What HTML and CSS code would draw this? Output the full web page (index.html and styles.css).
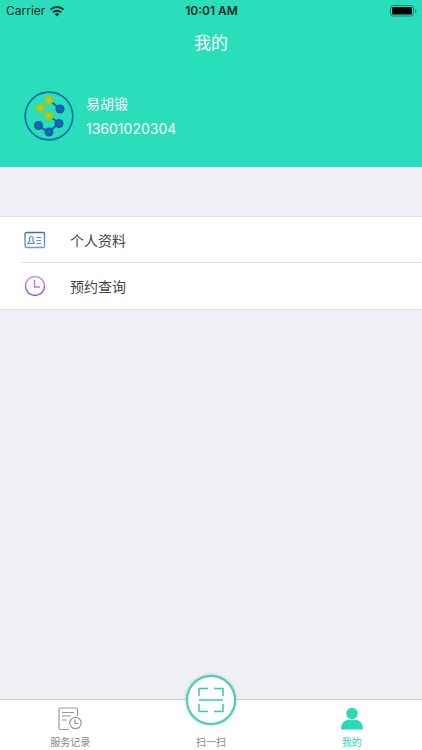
FILE: index.html
```html
<!DOCTYPE html>
<html lang="zh-CN">
<head>
<meta charset="utf-8">
<meta name="viewport" content="width=device-width, initial-scale=1">
<title>我的</title>
<link rel="stylesheet" href="styles.css">
</head>
<body>
<div class="app">
  <header class="header">
    <div class="status">
      <div class="carrier">
        <span>Carrier</span>
        <svg width="16" height="12" viewBox="0 0 16 12" fill="none" stroke="#062c25" stroke-width="2">
          <path d="M1.500 4.600a9.200 9.200 0 0 1 13 0M4 7.300a5.700 5.700 0 0 1 8 0"/>
          <path d="M8 11.500 5.800 9.200a3.100 3.100 0 0 1 4.400 0z" fill="#062c25" stroke="none"/>
        </svg>
      </div>
      <time class="clock">10:01 AM</time>
      <svg class="battery" width="27" height="12" viewBox="0 0 27 12">
        <rect x=".5" y=".5" width="23" height="10.500" rx="2.500" fill="none" stroke="#138570"/>
        <rect x="2" y="2" width="20" height="7.500" rx="1" fill="#000"/>
        <path d="M25 4v4q1.500-.5 1.500-2T25 4z" fill="#138570"/>
      </svg>
    </div>
    <h1 class="title">我的</h1>
    <div class="profile">
      <svg width="50" height="50" viewBox="0 0 50 50">
        <defs>
          <radialGradient id="blue"><stop offset="0" stop-color="#176fbd"/><stop offset="1" stop-color="#0b59a0"/></radialGradient>
          <radialGradient id="lime"><stop offset="0" stop-color="#c3cf16"/><stop offset="1" stop-color="#93c42c"/></radialGradient>
        </defs>
        <circle cx="25" cy="25" r="23.800" fill="none" stroke="#0d72a8" stroke-width="1.700"/>
        <g fill="none" stroke-width="2">
          <path d="M25 9l11 9M25 25l10 7-10 9-11-6" stroke="#0c68a4"/>
          <path d="M25 9l-9 8 9 8" stroke="#8bcb3b"/>
        </g>
        <g fill="url(#blue)"><circle cx="36" cy="18" r="4.500"/><circle cx="35" cy="32.500" r="4.500"/><circle cx="25" cy="41" r="4.500"/><circle cx="14.500" cy="34.500" r="4.500"/></g>
        <g fill="url(#lime)"><circle cx="25" cy="9" r="4.500"/><circle cx="16" cy="17" r="4.500"/><circle cx="25" cy="25" r="4.500"/></g>
      </svg>
      <div class="identity">
        <div class="name">易胡锻</div>
        <div class="phone">13601020304</div>
      </div>
    </div>
  </header>
  <main class="content">
    <nav class="list" aria-label="个人中心">
      <a class="row" href="#profile">
        <svg width="22" height="22" viewBox="0 0 22 22" fill="none" stroke="#5688dc">
          <defs><linearGradient id="card" x2="0" y2="1"><stop stop-color="#4867ad"/><stop offset="1" stop-color="#629cf4"/></linearGradient></defs>
          <rect x="1" y="3.500" width="19.500" height="15" rx="1.500" stroke="url(#card)" stroke-width="1.300"/>
          <path d="M4 14.500h6.500q0-1.500-1.700-2.200Q10 7.500 7.300 7.500T5.800 12.300Q4 13 4 14.500zM12.500 8.500H17M12.500 11.500H17M12.500 14.500H17" stroke-width="1.200"/>
        </svg>
        <span>个人资料</span>
      </a>
      <a class="row" href="#bookings">
        <svg width="22" height="22" viewBox="0 0 22 22" fill="none">
          <defs><linearGradient id="watch" x2="0" y2="1"><stop stop-color="#c594e6"/><stop offset="1" stop-color="#9843bf"/></linearGradient></defs>
          <circle cx="11" cy="11" r="9.500" stroke="url(#watch)" stroke-width="1.400"/>
          <path d="M10.500 5v7H16" stroke="#bd7bdd" stroke-width="1.400"/>
        </svg>
        <span>预约查询</span>
      </a>
    </nav>
  </main>
  <nav class="tabs" aria-label="主导航">
    <a class="tab" href="#records">
      <svg width="26" height="24" viewBox="0 0 26 24" fill="none" stroke="#999" stroke-width="1.200">
        <path d="M12 22.500H3.500Q2 22.500 2 21V2.500Q2 1 3.500 1H19q1.500 0 1.500 1.500V9M5 5.500h12M5 9h9M5 13h5"/>
        <circle cx="18.500" cy="16" r="5.700"/><path d="M18 12.500v4H21.500"/>
      </svg>
      <span>服务记录</span>
    </a>
    <a class="tab" href="#scan">
      <span class="scan">
        <svg width="26" height="26" viewBox="0 0 26 26" fill="none" stroke="#36cdae" stroke-width="1.500">
          <path d="M1 9V1.500h9M16 1.500h9V9M1 17v7.500h9M16 24.500h9V17M1 13h24"/>
        </svg>
      </span>
      <span>扫一扫</span>
    </a>
    <a class="tab active" href="#me" aria-current="page">
      <svg width="26" height="24" viewBox="0 0 26 24" fill="#2adab7">
        <circle cx="13" cy="6.500" r="5.700"/><path d="M2 22.500Q2 14 9.500 12.500q3.500 1.500 7 0Q24 14 24 22.500z"/>
      </svg>
      <span>我的</span>
    </a>
  </nav>
</div>
</body>
</html>
```
FILE: styles.css
```css
* {
  box-sizing: border-box;
}

body {
  margin: 0;
  background: #efeff5;
  color: #444;
  font-family: Inter, "Noto Sans CJK SC", sans-serif;
}

a {
  color: inherit;
  text-decoration: none;
}

svg {
  display: block;
  flex: none;
}

.app {
  display: flex;
  flex-direction: column;
  min-height: 100vh;
}

.header {
  padding-bottom: 24px;
  background: #2adebb;
  color: #fff;
}

.status {
  display: grid;
  grid-template-columns: 1fr auto 1fr;
  align-items: center;
  height: 22px;
  padding: 0 5px 0 6px;
  color: #062c25;
  font-size: 12px;
  line-height: 22px;
}

.carrier {
  display: flex;
  align-items: center;
  gap: 4px;
}

.clock {
  font-weight: 600;
}

.battery {
  justify-self: end;
}

.title {
  margin: 0;
  font-size: 17px;
  font-weight: 400;
  line-height: 42px;
  text-align: center;
}

.profile {
  display: flex;
  align-items: center;
  gap: 12px;
  padding: 27px 24px 2px;
}

.name,
.phone {
  font-size: 14px;
  line-height: 25px;
}

.content {
  flex: 1;
  padding-top: 49px;
}

.list {
  border: solid #e2e2e6;
  border-width: 1px 0;
  background: #fff;
}

.row {
  display: flex;
  align-items: center;
  gap: 24px;
  height: 45px;
  padding-left: 24px;
  font-size: 14px;
}

.row + .row {
  height: 47px;
  margin-left: 21px;
  padding-left: 3px;
  border-top: 1px solid #e2e2e6;
}

.tabs {
  display: grid;
  grid-template-columns: repeat(3, 1fr);
  height: 51px;
  border-top: 1px solid #cfcfd3;
  background: #fff;
}

.tab {
  position: relative;
  display: flex;
  flex-direction: column;
  align-items: center;
  justify-content: flex-end;
  gap: 4px;
  color: #888;
  font-size: 10px;
  line-height: 15px;
}

.active {
  color: #2adab7;
}

.scan {
  position: absolute;
  top: -25px;
  display: grid;
  place-items: center;
  width: 50px;
  height: 50px;
  border: 2px solid #47cdb3;
  border-radius: 50%;
  background: #fff;
  box-shadow: 0 0 3px #8dbcb4;
}
```
